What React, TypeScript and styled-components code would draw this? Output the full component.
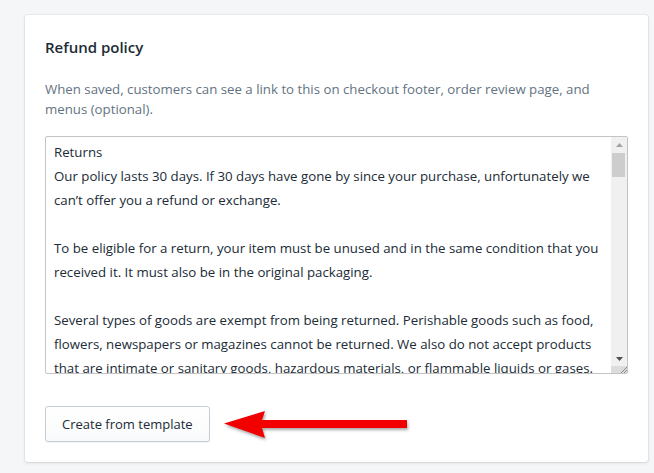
import React from "react";
import styled, { createGlobalStyle } from "styled-components";

const GlobalStyle = createGlobalStyle`
  html, body { margin: 0; padding: 0; background: #f4f6f8; }
  body { font-family: "Open Sans", "Noto Sans", Arial, sans-serif; }
`;

const Page = styled.div`
  padding: 15px 6px 11px 25px;
`;

const Card = styled.section`
  background: #fff;
  border-radius: 3px;
  box-shadow: 0 0 0 1px rgba(63, 63, 68, 0.05), 0 1px 3px 0 rgba(63, 63, 68, 0.15);
  padding: 20px;
`;

const Title = styled.h2`
  margin: 0;
  font-size: 15px;
  font-weight: 600;
  line-height: 24px;
  color: #212b36;
`;

const Description = styled.p`
  margin: 20px 0 17px;
  font-size: 13.25px;
  line-height: 20px;
  color: #637381;
`;

const TextBox = styled.div`
  display: flex;
  height: 238px;
  box-sizing: border-box;
  border: 1px solid #c4c4c4;
  border-radius: 2px;
  background: #fff;
  overflow: hidden;
`;

const TextContent = styled.div`
  flex: 1;
  padding: 3px 8px 0;
  overflow: hidden;
  font-size: 13.25px;
  line-height: 24px;
  color: #212b36;
`;

const Line = styled.div`
  white-space: nowrap;
  min-height: 24px;
`;

const Scrollbar = styled.div`
  width: 16px;
  display: flex;
  flex-direction: column;
  background: #f0f0f0;
`;

const ScrollButton = styled.div`
  height: 15px;
  display: flex;
  align-items: center;
  justify-content: center;
`;

const Thumb = styled.div`
  height: 24px;
  margin: 1px 2px 0 1px;
  background: #cdcdcd;
`;

const Track = styled.div`
  flex: 1;
`;

const Grip = styled.div`
  height: 7px;
  background: #dcdcdc;
  display: flex;
  align-items: flex-end;
  justify-content: flex-end;
`;

const ButtonRow = styled.div`
  margin-top: 32px;
  display: flex;
  align-items: center;
  gap: 11px;
`;

const Button = styled.button`
  height: 36px;
  padding: 0 16px;
  border: 1px solid #c4cdd5;
  border-radius: 3px;
  background: linear-gradient(to bottom, #fff, #f9fafb);
  box-shadow: 0 1px 0 0 rgba(22, 29, 37, 0.05);
  font-family: inherit;
  font-size: 13px;
  color: #212b36;
  cursor: pointer;
`;

const Arrow = styled.svg`
  display: block;
  overflow: visible;
  filter: drop-shadow(1px 2px 1.5px rgba(0, 0, 0, 0.35));
`;

const lines = [
  "Returns",
  "Our policy lasts 30 days. If 30 days have gone by since your purchase, unfortunately we",
  "can\u2019t offer you a refund or exchange.",
  "",
  "To be eligible for a return, your item must be unused and in the same condition that you",
  "received it. It must also be in the original packaging.",
  "",
  "Several types of goods are exempt from being returned. Perishable goods such as food,",
  "flowers, newspapers or magazines cannot be returned. We also do not accept products",
  "that are intimate or sanitary goods, hazardous materials, or flammable liquids or gases.",
];

export default function App() {
  return (
    <>
      <GlobalStyle />
      <Page>
        <Card>
          <Title>Refund policy</Title>
          <Description>
            When saved, customers can see a link to this on checkout footer, order review page, and
            <br />
            menus (optional).
          </Description>
          <TextBox>
            <TextContent>
              {lines.map((l, i) => (
                <Line key={i}>{l}</Line>
              ))}
            </TextContent>
            <Scrollbar>
              <ScrollButton>
                <svg width="7" height="4" viewBox="0 0 7 4">
                  <path d="M0 4 L3.5 0 L7 4 Z" fill="#a3a3a3" />
                </svg>
              </ScrollButton>
              <Thumb />
              <Track />
              <ScrollButton>
                <svg width="7" height="4" viewBox="0 0 7 4">
                  <path d="M0 0 L7 0 L3.5 4 Z" fill="#505050" />
                </svg>
              </ScrollButton>
              <Grip>
                <svg width="7" height="7" viewBox="0 0 7 7">
                  <path d="M1 7 L7 1 M4 7 L7 4" stroke="#8a8a8a" strokeWidth="1" />
                </svg>
              </Grip>
            </Scrollbar>
          </TextBox>
          <ButtonRow>
            <Button>Create from template</Button>
            <Arrow width="188" height="34" viewBox="0 0 188 34">
              <polygon
                points="3,16.5 44,4 41,13 186,13 186,21 41,21 44,31"
                fill="#f20000"
              />
            </Arrow>
          </ButtonRow>
        </Card>
      </Page>
    </>
  );
}
